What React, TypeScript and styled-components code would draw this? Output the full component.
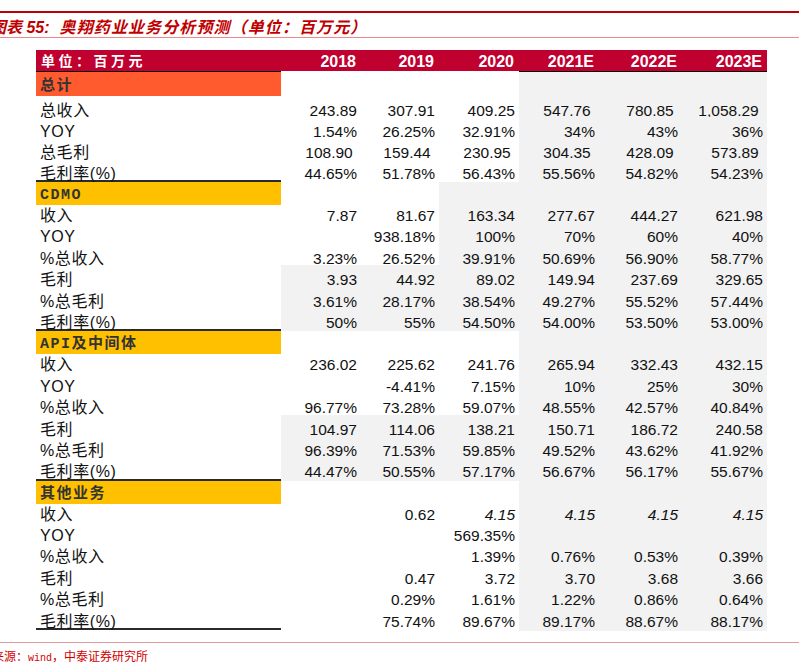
import React from "react";
import styled, { createGlobalStyle } from "styled-components";

const GlobalStyle = createGlobalStyle`
  html, body {
    margin: 0;
    padding: 0;
    background: #fff;
    overflow: hidden;
  }
  body {
    font-family: "Liberation Sans", Arial, "Noto Sans CJK SC", sans-serif;
    color: #000;
  }
`;

const COLS = "245px 80px 78px 80px 80px 83px 85px";

type Shade = "est" | "from2020" | "all";

// index of first grey data column
const greyFrom: Record<Shade, number> = { est: 3, from2020: 2, all: 0 };

type Row = {
  label: string;
  values: string[];
  shade: Shade;
  italicFrom?: number;
};

type Section = {
  name: string;
  color: string;
  bandShade: Shade;
  bandHeight: number;
  rowHeight: number;
  rows: Row[];
};

const years = ["2018", "2019", "2020", "2021E", "2022E", "2023E"];

const sections: Section[] = [
  {
    name: "总计",
    color: "#ff5b2f",
    bandShade: "est",
    bandHeight: 24,
    rowHeight: 21,
    rows: [
      { label: "总收入", values: ["243.89", "307.91", "409.25", "547.76 ", "780.85 ", "1,058.29 "], shade: "est" },
      { label: "YOY", values: ["1.54%", "26.25%", "32.91%", "34%", "43%", "36%"], shade: "est" },
      { label: "总毛利", values: ["108.90 ", "159.44 ", "230.95 ", "304.35 ", "428.09 ", "573.89 "], shade: "est" },
      { label: "毛利率(%)", values: ["44.65%", "51.78%", "56.43%", "55.56%", "54.82%", "54.23%"], shade: "est" },
    ],
  },
  {
    name: "CDMO",
    color: "#ffc000",
    bandShade: "from2020",
    bandHeight: 19,
    rowHeight: 21.4,
    rows: [
      { label: "收入", values: ["7.87", "81.67", "163.34", "277.67", "444.27", "621.98"], shade: "from2020" },
      { label: "YOY", values: ["", "938.18%", "100%", "70%", "60%", "40%"], shade: "from2020" },
      { label: "%总收入", values: ["3.23%", "26.52%", "39.91%", "50.69%", "56.90%", "58.77%"], shade: "from2020" },
      { label: "毛利", values: ["3.93", "44.92", "89.02", "149.94", "237.69", "329.65"], shade: "all" },
      { label: "%总毛利", values: ["3.61%", "28.17%", "38.54%", "49.27%", "55.52%", "57.44%"], shade: "all" },
      { label: "毛利率(%)", values: ["50%", "55%", "54.50%", "54.00%", "53.50%", "53.00%"], shade: "all" },
    ],
  },
  {
    name: "API及中间体",
    color: "#ffc000",
    bandShade: "est",
    bandHeight: 19,
    rowHeight: 21.4,
    rows: [
      { label: "收入", values: ["236.02", "225.62", "241.76", "265.94", "332.43", "432.15"], shade: "est" },
      { label: "YOY", values: ["", "-4.41%", "7.15%", "10%", "25%", "30%"], shade: "est" },
      { label: "%总收入", values: ["96.77%", "73.28%", "59.07%", "48.55%", "42.57%", "40.84%"], shade: "est" },
      { label: "毛利", values: ["104.97", "114.06", "138.21", "150.71", "186.72", "240.58"], shade: "all" },
      { label: "%总毛利", values: ["96.39%", "71.53%", "59.85%", "49.52%", "43.62%", "41.92%"], shade: "all" },
      { label: "毛利率(%)", values: ["44.47%", "50.55%", "57.17%", "56.67%", "56.17%", "55.67%"], shade: "all" },
    ],
  },
  {
    name: "其他业务",
    color: "#ffc000",
    bandShade: "est",
    bandHeight: 19,
    rowHeight: 21.4,
    rows: [
      { label: "收入", values: ["", "0.62", "4.15", "4.15", "4.15", "4.15"], shade: "est", italicFrom: 2 },
      { label: "YOY", values: ["", "", "569.35%", "", "", ""], shade: "est" },
      { label: "%总收入", values: ["", "", "1.39%", "0.76%", "0.53%", "0.39%"], shade: "est" },
      { label: "毛利", values: ["", "0.47", "3.72", "3.70", "3.68", "3.66"], shade: "est" },
      { label: "%总毛利", values: ["", "0.29%", "1.61%", "1.22%", "0.86%", "0.64%"], shade: "est" },
      { label: "毛利率(%)", values: ["", "75.74%", "89.67%", "89.17%", "88.67%", "88.17%"], shade: "est" },
    ],
  },
];

export default function App() {
  return (
    <>
      <GlobalStyle />
      <Page>
        <TopRule />
        <Title>
          图表 55:<TitleMain>奥翔药业业务分析预测（单位：百万元）</TitleMain>
        </Title>

        <Table>
          <HeadRow>
            <HeadLabel $line>单位：百万元</HeadLabel>
            {years.map((y, i) => (
              <HeadCell key={y} $line={i >= 3}>
                {y}
              </HeadCell>
            ))}
          </HeadRow>

          {sections.map((s, si) => (
            <SectionBox key={s.name} $first={si === 0}>
              <GridRow $h={s.bandHeight}>
                <BandLabel $color={s.color}>{s.name}</BandLabel>
                {years.map((y, i) => (
                  <Cell key={y} $grey={i >= greyFrom[s.bandShade]} />
                ))}
              </GridRow>
              {s.rows.map((r) => (
                <GridRow key={r.label} $h={s.rowHeight}>
                  <Label>{r.label}</Label>
                  {r.values.map((v, i) => (
                    <Cell
                      key={i}
                      $grey={i >= greyFrom[r.shade]}
                      $italic={r.italicFrom !== undefined && i >= r.italicFrom}
                    >
                      {v}
                    </Cell>
                  ))}
                </GridRow>
              ))}
            </SectionBox>
          ))}
        </Table>

        <FootRule />
        <Source>
          数据来源：<Latin>wind</Latin>，中泰证券研究所
        </Source>
      </Page>
    </>
  );
}

const Page = styled.div`
  width: 799px;
  height: 672px;
  display: flex;
  flex-direction: column;
`;

const TopRule = styled.div`
  margin-top: 11px;
  height: 2px;
  background: #c00000;
`;

const Title = styled.div`
  height: 25px;
  box-sizing: border-box;
  padding-top: 6px;
  margin-left: -10px;
  border-bottom: 1px solid #ec8a8a;
  font-size: 16px;
  line-height: 18px;
  font-weight: 700;
  font-style: italic;
  color: #c00000;
  white-space: nowrap;
`;

const TitleMain = styled.span`
  margin-left: 10px;
  letter-spacing: 1.1px;
`;

const Table = styled.div`
  margin: 12px 0 0 36px;
  width: 731px;
  border-bottom: 2px solid #2a2a2a;
`;

const HeadRow = styled.div`
  display: grid;
  grid-template-columns: ${COLS};
  height: 22px;
`;

const HeadLabel = styled.div<{ $line?: boolean }>`
  background: #c0002f;
  background-clip: padding-box;
  border-bottom: 1px solid ${(p) => (p.$line ? "#000" : "#fff")};
  color: #fff;
  font-family: "Liberation Mono", "Noto Sans CJK SC", monospace;
  font-size: 14px;
  font-weight: 700;
  letter-spacing: 3.5px;
  line-height: 18px;
  padding: 3px 0 0 5px;
  white-space: nowrap;
`;

const HeadCell = styled.div<{ $line?: boolean }>`
  background: #c0002f;
  background-clip: padding-box;
  border-bottom: 1px solid ${(p) => (p.$line ? "#000" : "#fff")};
  color: #fff;
  font-size: 16px;
  font-weight: 700;
  line-height: 18px;
  text-align: right;
  padding: 3px 5px 0 0;
`;

const SectionBox = styled.div<{ $first?: boolean }>`
  border-top: ${(p) => (p.$first ? "none" : "2px solid #2a2a2a")};
`;

const GridRow = styled.div<{ $h: number }>`
  display: grid;
  grid-template-columns: ${COLS};
  height: ${(p) => p.$h}px;
`;

const BandLabel = styled.div<{ $color: string }>`
  background: ${(p) => p.$color};
  color: #333;
  font-family: "Liberation Mono", "Noto Sans CJK SC", monospace;
  font-size: 15px;
  font-weight: 700;
  letter-spacing: 1.5px;
  line-height: 18px;
  display: flex;
  align-items: center;
  padding: 5px 0 0 4px;
  white-space: nowrap;
`;

const Label = styled.div`
  font-family: "Liberation Sans", "Noto Sans CJK SC", sans-serif;
  font-size: 16px;
  letter-spacing: 0.6px;
  line-height: 18px;
  color: #111;
  display: flex;
  align-items: center;
  padding: 6px 0 0 4px;
  white-space: nowrap;
`;

const Cell = styled.div<{ $grey?: boolean; $italic?: boolean }>`
  background: ${(p) => (p.$grey ? "#f2f2f2" : "#fff")};
  font-size: 15.5px;
  font-style: ${(p) => (p.$italic ? "italic" : "normal")};
  line-height: 18px;
  color: #111;
  display: flex;
  align-items: center;
  justify-content: flex-end;
  padding: 6px 4px 0 0;
  white-space: pre;
`;

const FootRule = styled.div`
  margin-top: 12px;
  height: 1px;
  background: #e09a9a;
`;

const Source = styled.div`
  margin: 6px 0 0 -32px;
  font-family: "Noto Sans CJK SC", sans-serif;
  font-size: 12px;
  line-height: 14px;
  color: #d00000;
  white-space: nowrap;
`;

const Latin = styled.span`
  font-family: "Liberation Mono", monospace;
  font-size: 10px;
`;
